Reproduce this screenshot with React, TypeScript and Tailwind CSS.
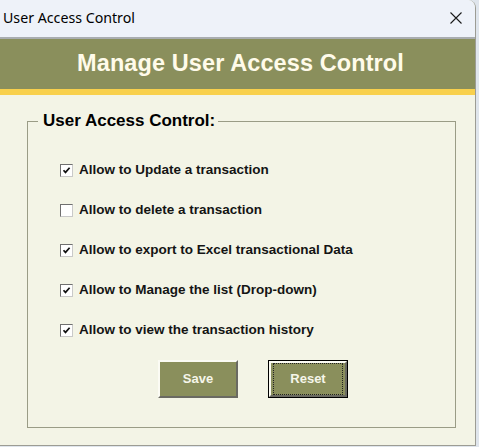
import { useState } from 'react';

const OPTIONS = [
  { id: 'update', label: 'Allow to Update a transaction', on: true },
  { id: 'delete', label: 'Allow to delete a transaction', on: false },
  { id: 'export', label: 'Allow to export to Excel transactional Data', on: true },
  { id: 'list', label: 'Allow to Manage the list (Drop-down)', on: true },
  { id: 'history', label: 'Allow to view the transaction history', on: true },
];

function CheckBox({ checked, onToggle }: { checked: boolean; onToggle: () => void }) {
  return (
    <button
      type="button"
      onClick={onToggle}
      className="flex h-[13px] w-[13px] shrink-0 items-center justify-center border border-t-[#6f6f6f] border-l-[#6f6f6f] border-r-[#c9c9c9] border-b-[#c9c9c9] bg-white"
    >
      {checked && (
        <svg width="9" height="9" viewBox="0 0 9 9">
          <path d="M1.5 4.2 L3.5 6.4 L7.6 1.8" fill="none" stroke="#111" strokeWidth="1.7" />
        </svg>
      )}
    </button>
  );
}

function OliveButton({ label, focused }: { label: string; focused?: boolean }) {
  const face = (
    <div className="flex h-full w-full items-center justify-center border-2 border-t-[#fbfbf4] border-l-[#fbfbf4] border-r-[#6a6a62] border-b-[#6a6a62] bg-[#8a8f5c]">
      <div
        className={`flex h-full w-full items-center justify-center text-[13px] font-bold text-[#f6f6ea] ${focused ? 'm-[2px] border border-dotted border-[#222]' : ''}`}
      >
        {label}
      </div>
    </div>
  );
  return (
    <button type="button" className={`h-[38px] w-[80px] ${focused ? 'border border-black' : ''}`}>
      {face}
    </button>
  );
}

export default function App() {
  const [state, setState] = useState<Record<string, boolean>>(
    Object.fromEntries(OPTIONS.map((o) => [o.id, o.on])),
  );

  return (
    <div className="h-[447px] w-[479px] bg-[#dfe5ec]" style={{ fontFamily: '"Liberation Sans", Arial, sans-serif' }}>
      <div className="flex h-[446px] w-[476px] flex-col overflow-hidden rounded-tr-[8px] border-r border-b border-[#9c9c94] bg-[#f3f4e6]">
        {/* title bar */}
        <div className="flex h-[39px] shrink-0 items-center justify-between border-b-2 border-[#a9adb0] bg-[#eef2f9] pl-[3px] pr-[13px]">
          <span className="pb-[2px] text-[14.2px] text-black" style={{ fontFamily: '"Noto Sans", "Open Sans", sans-serif' }}>
            User Access Control
          </span>
          <svg width="12" height="12" viewBox="0 0 12 12" className="mb-[2px]">
            <path d="M0.5 0.5 L11.5 11.5 M11.5 0.5 L0.5 11.5" stroke="#1a1a1a" strokeWidth="1.1" />
          </svg>
        </div>

        {/* header */}
        <div className="flex h-[50px] shrink-0 items-center justify-center bg-[#8a8f5c] pl-[6px]">
          <h1 className="text-[23.5px] font-bold tracking-[0.1px] text-[#fffbea]">Manage User Access Control</h1>
        </div>
        <div className="h-[6px] shrink-0 bg-[#f8d04c]" />

        {/* group box */}
        <fieldset className="mt-[17px] ml-[27px] h-[316px] w-[429px] border border-[#9a9c86] p-0">
          <legend className="ml-[10px] pr-[3px] pl-[5px] text-[17px] leading-[18px] font-bold text-black">
            User Access Control:
          </legend>
          <div className="flex flex-col pt-[20px] pl-[32px]">
            {OPTIONS.map((o) => (
              <div key={o.id} className="flex h-[40px] items-center gap-[6px]">
                <CheckBox
                  checked={state[o.id]}
                  onToggle={() => setState((s) => ({ ...s, [o.id]: !s[o.id] }))}
                />
                <span className="text-[13.5px] font-bold text-[#141414]">{o.label}</span>
              </div>
            ))}
          </div>
          <div className="mt-[10px] ml-[130px] flex gap-[30px]">
            <OliveButton label="Save" />
            <OliveButton label="Reset" focused />
          </div>
        </fieldset>
      </div>
    </div>
  );
}
